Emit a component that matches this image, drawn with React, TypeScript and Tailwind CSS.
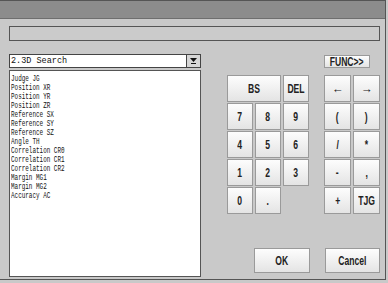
import React from 'react';

const items = [
  'Judge JG',
  'Position XR',
  'Position YR',
  'Position ZR',
  'Reference SX',
  'Reference SY',
  'Reference SZ',
  'Angle TH',
  'Correlation CR0',
  'Correlation CR1',
  'Correlation CR2',
  'Margin MG1',
  'Margin MG2',
  'Accuracy AC',
];

const btnFont = { fontFamily: '"Liberation Sans", Arial, sans-serif' };

function Key({ label, className = '', arrow = false }: { label: string; className?: string; arrow?: boolean }) {
  return (
    <button
      type="button"
      style={btnFont}
      className={`flex items-center justify-center border border-[#9a9a9a] bg-gradient-to-b from-[#fdfdfd] to-[#e4e4e4] text-[#222] leading-none ${arrow ? 'text-[13px] font-normal' : 'text-[13px] font-bold'} ${className}`}
    >
      <span className={`inline-block ${arrow ? 'scale-x-[0.9]' : 'scale-x-[0.66]'}`}>{label}</span>
    </button>
  );
}

export default function App() {
  return (
    <div className="w-[388px] h-[283px] bg-[#c9c9c9] overflow-hidden">
      <div className="w-[386px] h-[280px] flex flex-col border-t border-r border-b border-[#555]">
        {/* title bar */}
        <div className="h-[18px] bg-[#8c8c8c] border-b border-[#6e6e6e]" />

        {/* entry field */}
        <div className="mt-[7px] ml-[9px] w-[371px] h-[15px] border border-[#555] bg-[#cbcbcb]" />

        <div className="flex mt-[13px] ml-[9px]">
          {/* left column */}
          <div className="flex flex-col w-[192px]">
            <div className="flex h-[14px] border border-[#444] bg-white">
              <div
                className="flex-1 pl-[1px] text-[8.5px] leading-[12px] text-[#111]"
                style={{ fontFamily: '"Liberation Mono", monospace' }}
              >
                2.3D Search
              </div>
              <div className="w-[14px] h-[12px] flex items-center justify-center border-l border-[#444] bg-[#d6d6d6]">
                <svg width="7" height="6" viewBox="0 0 7 6">
                  <path d="M0 0h7L3.5 4z" fill="#111" />
                  <rect x="1" y="5" width="5" height="1" fill="#111" />
                </svg>
              </div>
            </div>

            <div className="mt-[2px] h-[207px] border border-[#555] bg-white pt-[4px] pl-[1px]">
              {items.map((it) => (
                <div
                  key={it}
                  className="h-[9px] text-[8.5px] leading-[9px] text-[#111] whitespace-pre"
                  style={{ fontFamily: '"Liberation Mono", monospace' }}
                >
                  <span className="inline-block origin-left scale-x-[0.7]">{it}</span>
                </div>
              ))}
            </div>
          </div>

          {/* right column */}
          <div className="flex flex-col ml-[26px] w-[153px]">
            <div className="flex justify-end pr-[10px] pt-[1px]">
              <Key label="FUNC>>" className="w-[46px] h-[13px]" />
            </div>

            <div className="flex mt-[7px]">
              <div className="grid grid-cols-[26px_26px_26px] auto-rows-[27px] gap-x-[2px] gap-y-[1px]">
                <Key label="BS" className="col-span-2" />
                <Key label="DEL" />
                <Key label="7" />
                <Key label="8" />
                <Key label="9" />
                <Key label="4" />
                <Key label="5" />
                <Key label="6" />
                <Key label="1" />
                <Key label="2" />
                <Key label="3" />
                <Key label="0" />
                <Key label="." />
              </div>
              <div className="ml-[15px] grid grid-cols-[27px_27px] auto-rows-[27px] gap-x-[2px] gap-y-[1px]">
                <Key label="←" arrow />
                <Key label="→" arrow />
                <Key label="(" />
                <Key label=")" />
                <Key label="/" />
                <Key label="*" />
                <Key label="-" />
                <Key label="," />
                <Key label="+" />
                <Key label="TJG" />
              </div>
            </div>

            <div className="flex mt-[34px] ml-[27px] gap-[15px]">
              <Key label="OK" className="w-[56px] h-[25px]" />
              <Key label="Cancel" className="w-[56px] h-[25px]" />
            </div>
          </div>
        </div>
      </div>
    </div>
  );
}
